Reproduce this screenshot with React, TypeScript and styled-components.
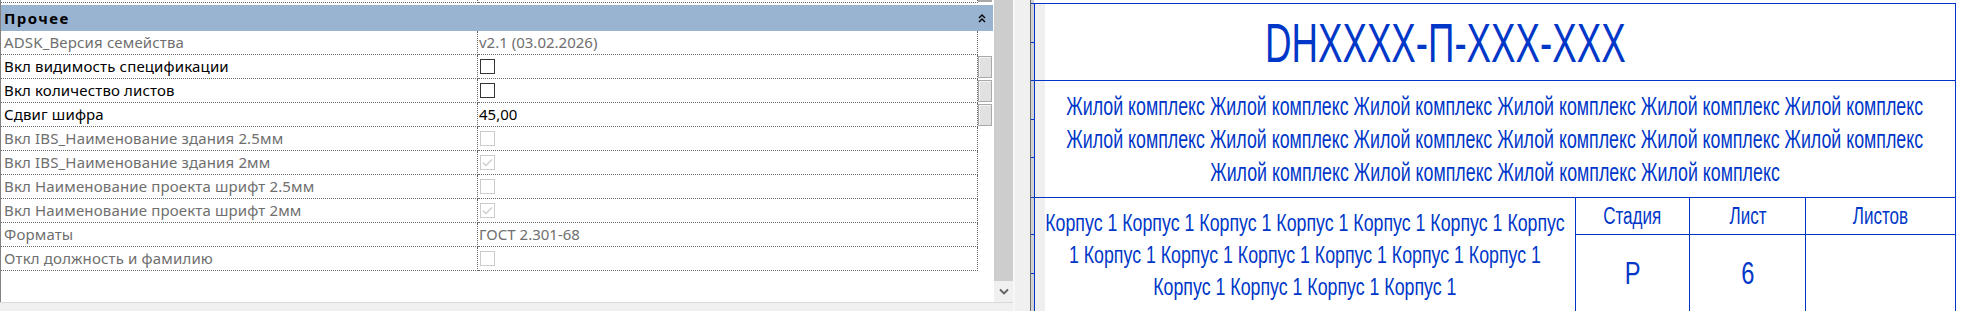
import React from "react";
import styled, { createGlobalStyle } from "styled-components";

const Global = createGlobalStyle`
  html, body { margin: 0; padding: 0; background: #fff; }
  body { width: 1963px; height: 311px; overflow: hidden; }
  #root { width: 1963px; height: 311px; }
  * { box-sizing: border-box; }
`;

const Screen = styled.div`
  display: flex;
  width: 1963px;
  height: 311px;
  overflow: hidden;
`;

/* ---------- properties palette ---------- */

const PropertiesPane = styled.div`
  width: 1013px;
  flex: none;
  display: flex;
  flex-direction: column;
  background: #f0f0f0;
`;

const PropertiesBody = styled.div`
  height: 302px;
  display: flex;
  background: #fff;
`;

const Grid = styled.div`
  width: 993px;
  border-left: 1px solid #828282;
  display: flex;
  flex-direction: column;
  font-family: "Noto Sans", "Open Sans", sans-serif;
  font-size: 15px;
  color: #000;
`;

const Row = styled.div<{ $height: number }>`
  display: grid;
  grid-template-columns: 477px 500px 15px;
  height: ${(p) => p.$height}px;
`;

const LabelCell = styled.div<{ $disabled?: boolean }>`
  border-right: 1px dotted #6a6a6a;
  border-bottom: 1px dotted #6a6a6a;
  padding-left: 3px;
  line-height: 23px;
  letter-spacing: 0.15px;
  white-space: nowrap;
  overflow: hidden;
  color: ${(p) => (p.$disabled ? "#6f6f6f" : "#000")};
`;

const ValueCell = styled.div<{ $disabled?: boolean }>`
  border-right: 1px dotted #6a6a6a;
  border-bottom: 1px dotted #6a6a6a;
  padding-left: 1px;
  line-height: 23px;
  white-space: nowrap;
  display: flex;
  align-items: center;
  color: ${(p) => (p.$disabled ? "#6f6f6f" : "#000")};
`;

const SideCell = styled.div<{ $flush?: boolean }>`
  display: flex;
  align-items: flex-start;
  padding: ${(p) => (p.$flush ? "0 1px 0 0" : "1px 1px 0 0")};
`;

const AssocButton = styled.div<{ $height: number }>`
  width: 14px;
  height: ${(p) => p.$height}px;
  background: #e1e1e1;
  border: 1px solid #a9a9a9;
  box-shadow: inset 1px 1px 0 #f4f4f4;
`;

const CheckBox = styled.span<{ $disabled?: boolean }>`
  width: 15px;
  height: 15px;
  margin-left: 1px;
  border: 1px solid ${(p) => (p.$disabled ? "#cccccc" : "#333333")};
  background: #fff;
  display: flex;
  align-items: center;
  justify-content: center;
`;

const SectionHeader = styled.div`
  height: 26px;
  margin-top: 2px;
  background: #99b4d1;
  display: flex;
  align-items: center;
  justify-content: space-between;
  padding: 0 7px 0 3px;
  font-weight: 700;
  letter-spacing: 1.4px;
  color: #000;
`;

const Scrollbar = styled.div`
  width: 19px;
  margin-left: 1px;
  display: flex;
  flex-direction: column;
  background: #f0f0f0;
`;

const ScrollThumb = styled.div`
  height: 281px;
  background: #cdcdcd;
`;

const ScrollArrow = styled.div`
  flex: 1;
  display: flex;
  align-items: center;
  justify-content: center;
`;

const StatusStrip = styled.div`
  flex: 1;
  border-top: 1px solid #dadada;
  background: #f0f0f0;
`;

const Splitter = styled.div`
  width: 17px;
  flex: none;
  background: #f0f0f0;
  border-left: 2px solid #f7f7f7;
`;

/* ---------- drawing view ---------- */

const DrawingPane = styled.div`
  flex: 1;
  display: flex;
  border-left: 1px solid #6b6b6b;
  background: #fff;
  overflow: hidden;
`;

const Rail = styled.div`
  width: 3px;
  flex: none;
  background: #d2d2d2;
`;

const TitleBlock = styled.div`
  margin-top: 3px;
  width: 922px;
  flex: none;
  align-self: flex-start;
  border: 1px solid #0033c8;
  border-bottom: none;
  background: linear-gradient(90deg, #efefef 0, #efefef 10px, #fff 10px);
  display: grid;
  grid-template-columns: 920px;
  grid-template-rows: 77px 117px auto;
  color: #0037c8;
  font-family: "Liberation Sans", Arial, sans-serif;
`;

const TitleRow = styled.div`
  min-width: 0;
  border-bottom: 1px solid #0033c8;
  display: flex;
  align-items: center;
  justify-content: center;
  padding-right: 100px;
`;

const NameRow = styled.div`
  min-width: 0;
  border-bottom: 1px solid #0033c8;
  display: flex;
  flex-direction: column;
  align-items: center;
  justify-content: center;
`;

const Line = styled.div<{ $lh: number }>`
  height: ${(p) => p.$lh}px;
  line-height: ${(p) => p.$lh}px;
  display: flex;
  justify-content: center;
`;

const Narrow = styled.span<{ $size: number; $scale: number }>`
  display: inline-block;
  white-space: nowrap;
  font-size: ${(p) => p.$size}px;
  transform: scaleX(${(p) => p.$scale});
  transform-origin: center;
`;

const InfoRow = styled.div`
  min-width: 0;
  display: grid;
  grid-template-columns: 541px 114px 116px 149px;
  height: 120px;
`;

const BuildingCell = styled.div`
  min-width: 0;
  border-right: 1px solid #0033c8;
  display: flex;
  flex-direction: column;
  align-items: center;
  padding-top: 9px;
`;

const StampCol = styled.div<{ $last?: boolean }>`
  border-right: ${(p) => (p.$last ? "none" : "1px solid #0033c8")};
  display: grid;
  grid-template-rows: 37px 77px;
`;

const StampHead = styled.div`
  border-bottom: 1px solid #0033c8;
  display: flex;
  align-items: center;
  justify-content: center;
`;

const StampValue = styled.div`
  display: flex;
  align-items: center;
  justify-content: center;
`;

type Prop = {
  label: string;
  disabled?: boolean;
  text?: string;
  check?: "on" | "off";
  button?: boolean;
};

const props: Prop[] = [
  { label: "ADSK_Версия семейства", disabled: true, text: "v2.1 (03.02.2026)" },
  { label: "Вкл видимость спецификации", check: "off", button: true },
  { label: "Вкл количество листов", check: "off", button: true },
  { label: "Сдвиг шифра", text: "45,00", button: true },
  { label: "Вкл IBS_Наименование здания 2.5мм", disabled: true, check: "off" },
  { label: "Вкл IBS_Наименование здания 2мм", disabled: true, check: "on" },
  { label: "Вкл Наименование проекта шрифт 2.5мм", disabled: true, check: "off" },
  { label: "Вкл Наименование проекта шрифт 2мм", disabled: true, check: "on" },
  { label: "Форматы", disabled: true, text: "ГОСТ 2.301-68" },
  { label: "Откл должность и фамилию", disabled: true, check: "off" },
];

const CheckMark = () => (
  <svg width="11" height="9" viewBox="0 0 11 9">
    <polyline points="1,4.5 4,7.5 10,1.5" fill="none" stroke="#cfcfcf" strokeWidth="1.3" />
  </svg>
);

const CollapseIcon = () => (
  <svg width="8" height="9" viewBox="0 0 8 9">
    <polyline points="1,4 4,1 7,4" fill="none" stroke="#000" strokeWidth="1.4" />
    <polyline points="1,8 4,5 7,8" fill="none" stroke="#000" strokeWidth="1.4" />
  </svg>
);

const DownChevron = () => (
  <svg width="10" height="7" viewBox="0 0 10 7">
    <polyline points="1,1.5 5,5.5 9,1.5" fill="none" stroke="#606060" strokeWidth="1.8" />
  </svg>
);

const Ticks = () => {
  const ys = [3, 42, 80, 119, 157, 197, 234, 273];
  return (
    <svg width="3" height="311" viewBox="0 0 3 311" style={{ display: "block" }}>
      {ys.map((y) => (
        <rect key={y} x="0" y={y} width="3" height="1" fill="#0033c8" />
      ))}
    </svg>
  );
};

const zhk = "Жилой комплекс";
const rep = (s: string, n: number) => Array(n).fill(s).join(" ");

const NAME_SCALE = 0.712;
const BLDG_SCALE = 0.74;
const STAMP_SCALE = 0.74;

export default function App() {
  return (
    <Screen>
      <Global />
      <PropertiesPane>
        <PropertiesBody>
          <Grid>
            <Row $height={3}>
              <LabelCell />
              <ValueCell />
              <SideCell $flush>
                <AssocButton $height={2} />
              </SideCell>
            </Row>
            <SectionHeader>
              <span>Прочее</span>
              <CollapseIcon />
            </SectionHeader>
            {props.map((p) => (
              <Row $height={24} key={p.label}>
                <LabelCell $disabled={p.disabled}>{p.label}</LabelCell>
                <ValueCell $disabled={p.disabled}>
                  {p.text}
                  {p.check && (
                    <CheckBox $disabled={p.disabled}>{p.check === "on" && <CheckMark />}</CheckBox>
                  )}
                </ValueCell>
                <SideCell>{p.button && <AssocButton $height={22} />}</SideCell>
              </Row>
            ))}
          </Grid>
          <Scrollbar>
            <ScrollThumb />
            <ScrollArrow>
              <DownChevron />
            </ScrollArrow>
          </Scrollbar>
        </PropertiesBody>
        <StatusStrip />
      </PropertiesPane>
      <Splitter />
      <DrawingPane>
        <Rail>
          <Ticks />
        </Rail>
        <TitleBlock>
          <TitleRow>
            <Narrow $size={56} $scale={0.655}>DHXXXX-П-XXX-XXX</Narrow>
          </TitleRow>
          <NameRow>
            <Line $lh={33}>
              <Narrow $size={25} $scale={NAME_SCALE}>{rep(zhk, 6)}</Narrow>
            </Line>
            <Line $lh={33}>
              <Narrow $size={25} $scale={NAME_SCALE}>{rep(zhk, 6)}</Narrow>
            </Line>
            <Line $lh={33}>
              <Narrow $size={25} $scale={NAME_SCALE}>{rep(zhk, 4)}</Narrow>
            </Line>
          </NameRow>
          <InfoRow>
            <BuildingCell>
              <Line $lh={32}>
                <Narrow $size={24} $scale={BLDG_SCALE}>
                  Корпус 1 Корпус 1 Корпус 1 Корпус 1 Корпус 1 Корпус 1 Корпус
                </Narrow>
              </Line>
              <Line $lh={32}>
                <Narrow $size={24} $scale={BLDG_SCALE}>
                  1 Корпус 1 Корпус 1 Корпус 1 Корпус 1 Корпус 1 Корпус 1
                </Narrow>
              </Line>
              <Line $lh={32}>
                <Narrow $size={24} $scale={BLDG_SCALE}>
                  Корпус 1 Корпус 1 Корпус 1 Корпус 1
                </Narrow>
              </Line>
            </BuildingCell>
            <StampCol>
              <StampHead>
                <Narrow $size={23} $scale={STAMP_SCALE}>Стадия</Narrow>
              </StampHead>
              <StampValue>
                <Narrow $size={32} $scale={STAMP_SCALE}>Р</Narrow>
              </StampValue>
            </StampCol>
            <StampCol>
              <StampHead>
                <Narrow $size={23} $scale={STAMP_SCALE}>Лист</Narrow>
              </StampHead>
              <StampValue>
                <Narrow $size={32} $scale={STAMP_SCALE}>6</Narrow>
              </StampValue>
            </StampCol>
            <StampCol $last>
              <StampHead>
                <Narrow $size={23} $scale={STAMP_SCALE}>Листов</Narrow>
              </StampHead>
              <StampValue />
            </StampCol>
          </InfoRow>
        </TitleBlock>
      </DrawingPane>
    </Screen>
  );
}
